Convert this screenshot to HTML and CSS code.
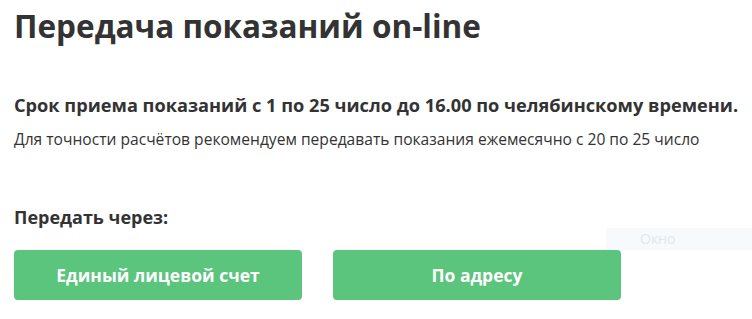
FILE: index.html
```html
<!DOCTYPE html>
<html lang="ru">
<head>
    <meta charset="UTF-8">
    <meta name="viewport" content="width=device-width, initial-scale=1.0">
    <title>Передача показаний on-line</title>
    <link rel="stylesheet" href="styles.css">
</head>
<body>
    <div class="page">
        <h1>Передача показаний on-line</h1>
        <p class="deadline">Срок приема показаний с 1 по 25 число до 16.00 по челябинскому времени.</p>
        <p class="hint">Для точности расчётов рекомендуем передавать показания ежемесячно с 20 по 25 число</p>
        <h3>Передать через:</h3>
        <div class="buttons">
            <button class="send-btn">Единый лицевой счет</button>
            <button class="send-btn">По адресу</button>
        </div>
    </div>
    <div class="window-tag">Окно</div>
</body>
</html>
```

FILE: styles.css
```css
* {
    box-sizing: border-box;
}
body {
    margin: 0;
    background-color: white;
    color: #333;
    font-family: "Open Sans", sans-serif;
}
.page {
    padding: 0 6px 0 14px;
}
h1 {
    margin: 0;
    padding-top: 4px;
    font-size: 31.5px;
    line-height: 44px;
    font-weight: 700;
}
.deadline {
    margin: 45px 0 0;
    font-size: 18.2px;
    line-height: 24px;
    font-weight: 700;
    white-space: nowrap;
}
.hint {
    margin: 12px 0 0;
    font-size: 15.6px;
    line-height: 20px;
}
h3 {
    margin: 56px 0 0;
    font-size: 18px;
    line-height: 24px;
    font-weight: 700;
}
.buttons {
    display: flex;
    gap: 31px;
    margin-top: 21px;
}
.send-btn {
    width: 288px;
    height: 50px;
    border: none;
    border-radius: 4px;
    background-color: #5bc47d;
    color: white;
    font-family: "Open Sans", sans-serif;
    font-size: 17.5px;
    font-weight: 700;
}
.window-tag {
    position: absolute;
    left: 606px;
    top: 228px;
    width: 146px;
    height: 22px;
    padding-left: 34px;
    background-color: #f6fafd;
    color: #e2e7eb;
    font-size: 14px;
    line-height: 22px;
}
```
